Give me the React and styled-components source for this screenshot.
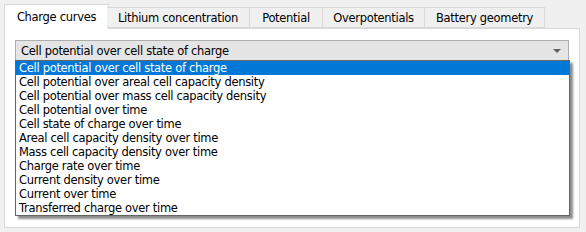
import React from "react";
import styled, { createGlobalStyle } from "styled-components";

const Global = createGlobalStyle`
  html, body {
    margin: 0;
    background: #f0f0f0;
  }
  body {
    font-family: "DejaVu Sans", "Liberation Sans", sans-serif;
    font-size: 11px;
    color: #000;
  }
`;

const Window = styled.div`
  width: 586px;
  height: 232px;
  box-sizing: border-box;
  padding: 4px 6px 4px 4px;
  display: flex;
  flex-direction: column;
`;

const TabBar = styled.div`
  display: flex;
  align-items: flex-end;
  padding-left: 2px;
  height: 24px;
  position: relative;
  z-index: 1;
`;

const Tab = styled.div`
  box-sizing: border-box;
  width: ${(p) => p.$w}px;
  height: ${(p) => (p.$active ? 25 : 21)}px;
  margin: ${(p) => (p.$active ? "0 -2px -1px -2px" : "0")};
  border: 1px solid #d9d9d9;
  border-left-width: ${(p) => (p.$first || p.$active ? 1 : 0)}px;
  border-bottom: ${(p) => (p.$active ? "none" : "1px solid #d9d9d9")};
  background: ${(p) => (p.$active ? "#ffffff" : "#f0f0f0")};
  display: flex;
  align-items: center;
  justify-content: center;
  font-size: 11.5px;
  letter-spacing: -0.3px;
  padding-top: ${(p) => (p.$active ? 0 : 1)}px;
  white-space: nowrap;
`;

const Pane = styled.div`
  flex: 1;
  box-sizing: border-box;
  border: 1px solid #d9d9d9;
  background: #ffffff;
  padding: 11px 10px 0 10px;
`;

const ComboWrap = styled.div`
  position: relative;
`;

const Combo = styled.div`
  box-sizing: border-box;
  height: 21px;
  border: 1px solid #adadad;
  background: #e5e5e5;
  display: flex;
  align-items: center;
  padding-left: 5px;
  position: relative;
  letter-spacing: -0.3px;
  font-size: 11.5px;
`;

const Arrow = styled.span`
  position: absolute;
  right: 7px;
  top: 8px;
  width: 0;
  height: 0;
  border-left: 4px solid transparent;
  border-right: 4px solid transparent;
  border-top: 4px solid #606060;
`;

const List = styled.div`
  position: absolute;
  top: 20px;
  left: 0;
  right: -1px;
  background: #ffffff;
  border: 1px solid #646464;
  box-shadow: 3px 3px 2px rgba(0, 0, 0, 0.45);
  display: flex;
  flex-direction: column;
`;

const Item = styled.div`
  height: 14px;
  line-height: 14px;
  padding-left: 3px;
  background: ${(p) => (p.$selected ? "#0078d7" : "transparent")};
  color: ${(p) => (p.$selected ? "#ffffff" : "#000000")};
  letter-spacing: -0.3px;
  font-size: 11.5px;
  white-space: nowrap;
`;

const tabs = [
  { label: "Charge curves", w: 101 },
  { label: "Lithium concentration", w: 143 },
  { label: "Potential", w: 73 },
  { label: "Overpotentials", w: 102 },
  { label: "Battery geometry", w: 120 },
];

const items = [
  "Cell potential over cell state of charge",
  "Cell potential over areal cell capacity density",
  "Cell potential over mass cell capacity density",
  "Cell potential over time",
  "Cell state of charge over time",
  "Areal cell capacity density over time",
  "Mass cell capacity density over time",
  "Charge rate over time",
  "Current density over time",
  "Current over time",
  "Transferred charge over time",
];

export default function App() {
  return (
    <>
      <Global />
      <Window>
        <TabBar>
          {tabs.map((t, i) => (
            <Tab key={t.label} $w={i === 0 ? t.w + 4 : t.w} $active={i === 0} $first={i === 0}>
              {t.label}
            </Tab>
          ))}
        </TabBar>
        <Pane>
          <ComboWrap>
            <Combo>
              {items[0]}
              <Arrow />
            </Combo>
            <List>
              {items.map((it, i) => (
                <Item key={it} $selected={i === 0}>
                  {it}
                </Item>
              ))}
            </List>
          </ComboWrap>
        </Pane>
      </Window>
    </>
  );
}
